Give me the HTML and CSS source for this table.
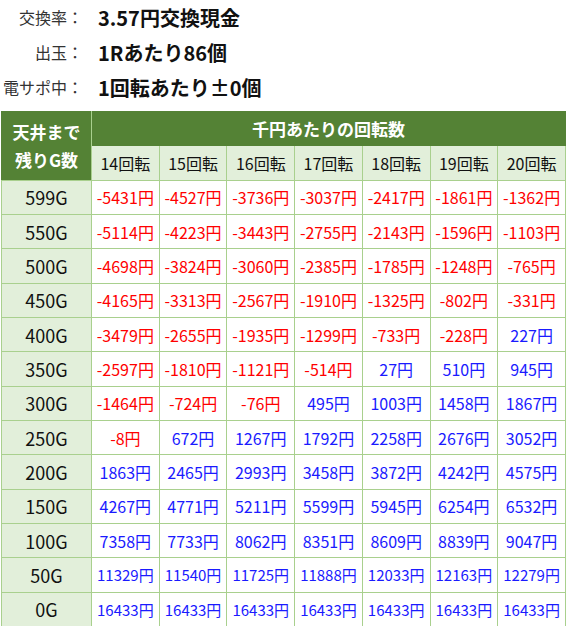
FILE: index.html
```html
<!DOCTYPE html>
<html lang="ja">
<head>
<meta charset="utf-8">
<link rel="stylesheet" href="styles.css">
</head>
<body>
<div class="page">
  <dl class="info">
    <dt>交換率：</dt><dd>3.57円交換現金</dd>
    <dt>出玉：</dt><dd>1Rあたり86個</dd>
    <dt>電サポ中：</dt><dd>1回転あたり±0個</dd>
  </dl>
  <table class="tbl">
    <thead>
      <tr>
        <th class="corner" rowspan="2">天井まで<br>残りG数</th>
        <th class="top" colspan="7">千円あたりの回転数</th>
      </tr>
      <tr class="sub">
        <th>14回転</th><th>15回転</th><th>16回転</th><th>17回転</th><th>18回転</th><th>19回転</th><th>20回転</th>
      </tr>
    </thead>
    <tbody>
      <tr><th>599G</th><td class="m">-5431円</td><td class="m">-4527円</td><td class="m">-3736円</td><td class="m">-3037円</td><td class="m">-2417円</td><td class="m">-1861円</td><td class="m">-1362円</td></tr>
      <tr><th>550G</th><td class="m">-5114円</td><td class="m">-4223円</td><td class="m">-3443円</td><td class="m">-2755円</td><td class="m">-2143円</td><td class="m">-1596円</td><td class="m">-1103円</td></tr>
      <tr><th>500G</th><td class="m">-4698円</td><td class="m">-3824円</td><td class="m">-3060円</td><td class="m">-2385円</td><td class="m">-1785円</td><td class="m">-1248円</td><td class="m">-765円</td></tr>
      <tr><th>450G</th><td class="m">-4165円</td><td class="m">-3313円</td><td class="m">-2567円</td><td class="m">-1910円</td><td class="m">-1325円</td><td class="m">-802円</td><td class="m">-331円</td></tr>
      <tr><th>400G</th><td class="m">-3479円</td><td class="m">-2655円</td><td class="m">-1935円</td><td class="m">-1299円</td><td class="m">-733円</td><td class="m">-228円</td><td class="p">227円</td></tr>
      <tr><th>350G</th><td class="m">-2597円</td><td class="m">-1810円</td><td class="m">-1121円</td><td class="m">-514円</td><td class="p">27円</td><td class="p">510円</td><td class="p">945円</td></tr>
      <tr><th>300G</th><td class="m">-1464円</td><td class="m">-724円</td><td class="m">-76円</td><td class="p">495円</td><td class="p">1003円</td><td class="p">1458円</td><td class="p">1867円</td></tr>
      <tr><th>250G</th><td class="m">-8円</td><td class="p">672円</td><td class="p">1267円</td><td class="p">1792円</td><td class="p">2258円</td><td class="p">2676円</td><td class="p">3052円</td></tr>
      <tr><th>200G</th><td class="p">1863円</td><td class="p">2465円</td><td class="p">2993円</td><td class="p">3458円</td><td class="p">3872円</td><td class="p">4242円</td><td class="p">4575円</td></tr>
      <tr><th>150G</th><td class="p">4267円</td><td class="p">4771円</td><td class="p">5211円</td><td class="p">5599円</td><td class="p">5945円</td><td class="p">6254円</td><td class="p">6532円</td></tr>
      <tr><th>100G</th><td class="p">7358円</td><td class="p">7733円</td><td class="p">8062円</td><td class="p">8351円</td><td class="p">8609円</td><td class="p">8839円</td><td class="p">9047円</td></tr>
      <tr><th>50G</th><td class="p s">11329円</td><td class="p s">11540円</td><td class="p s">11725円</td><td class="p s">11888円</td><td class="p s">12033円</td><td class="p s">12163円</td><td class="p s">12279円</td></tr>
      <tr><th>0G</th><td class="p s">16433円</td><td class="p s">16433円</td><td class="p s">16433円</td><td class="p s">16433円</td><td class="p s">16433円</td><td class="p s">16433円</td><td class="p s">16433円</td></tr>
    </tbody>
  </table>
</div>
</body>
</html>
```
FILE: styles.css
```css
html, body {
  margin: 0;
  padding: 0;
  background: #ffffff;
}
body {
  font-family: "Noto Sans CJK JP", "Noto Sans", sans-serif;
  color: #111;
}
.page {
  padding: 0 0 0 1px;
}
.info {
  display: grid;
  grid-template-columns: 82px auto;
  column-gap: 15px;
  margin: 0;
  height: 111px;
  align-content: start;
}
.info dt {
  text-align: right;
  font-size: 16px;
  color: #333;
  height: 35px;
  line-height: 35px;
  white-space: nowrap;
}
.info dd {
  margin: 0;
  font-size: 20px;
  font-weight: bold;
  color: #111;
  height: 35px;
  line-height: 35px;
}
.tbl {
  border-collapse: collapse;
  width: 565px;
  table-layout: fixed;
  font-size: 16px;
}
.tbl th, .tbl td {
  border: 1px solid #a9d08e;
  padding: 0;
  text-align: center;
  white-space: nowrap;
  font-weight: normal;
}
.tbl tr {
  height: 34.33px;
}
.tbl .corner {
  width: 89px;
  background: #548235;
  color: #fff;
  font-weight: bold;
  font-size: 17px;
  line-height: 28px;
  border-color: #548235 #a9d08e #a9d08e #548235;
}
.tbl .top {
  background: #548235;
  color: #fff;
  font-weight: bold;
  font-size: 17px;
  border-color: #548235;
}
.tbl .sub th {
  background: #e2efda;
  color: #111;
}
.tbl tbody th {
  background: #e2efda;
  color: #111;
  font-size: 18px;
}
.tbl td.m {
  color: #ff0000;
}
.tbl td.p {
  color: #1a1aff;
}
.tbl td.s {
  font-size: 15px;
}
```
